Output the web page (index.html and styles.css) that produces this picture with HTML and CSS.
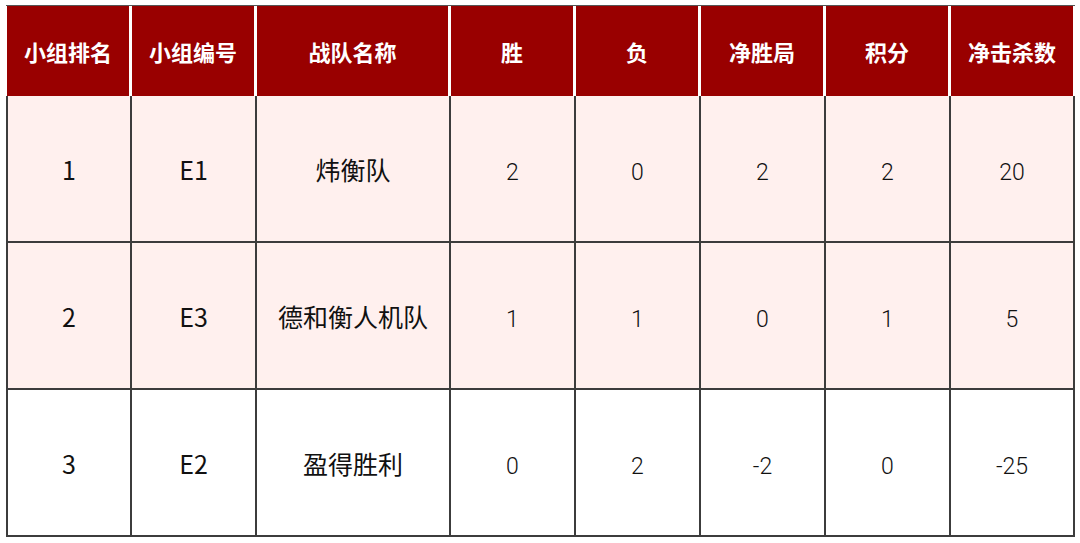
FILE: index.html
```html
<!DOCTYPE html>
<html lang="zh">
<head>
<meta charset="utf-8">
<link rel="stylesheet" href="styles.css">
</head>
<body>
<div class="board">
  <div class="head">
    <div class="hc">小组排名</div>
    <div class="hc">小组编号</div>
    <div class="hc">战队名称</div>
    <div class="hc">胜</div>
    <div class="hc">负</div>
    <div class="hc">净胜局</div>
    <div class="hc">积分</div>
    <div class="hc">净击杀数</div>
  </div>
  <div class="body">
    <div class="c big pink">1</div><div class="c big pink">E1</div><div class="c big pink">炜衡队</div>
    <div class="c num pink">2</div><div class="c num pink">0</div><div class="c num pink">2</div><div class="c num pink">2</div><div class="c num pink">20</div>

    <div class="c big pink">2</div><div class="c big pink">E3</div><div class="c big pink">德和衡人机队</div>
    <div class="c num pink">1</div><div class="c num pink">1</div><div class="c num pink">0</div><div class="c num pink">1</div><div class="c num pink">5</div>

    <div class="c big">3</div><div class="c big">E2</div><div class="c big">盈得胜利</div>
    <div class="c num">0</div><div class="c num">2</div><div class="c num">-2</div><div class="c num">0</div><div class="c num">-25</div>
  </div>
</div>
</body>
</html>
```

FILE: styles.css
```css
html, body {
  margin: 0;
  padding: 0;
  background: #ffffff;
}
.board {
  margin: 5px 0 0 6px;
  width: 1069px;
}
.head {
  display: grid;
  grid-template-columns: 122px 122px 191px 122px 122px 122px 122px 122px;
  column-gap: 3px;
  border-top: 1px solid #555;
  height: 90px;
  padding-left: 1px;
}
.hc {
  background: #990000;
  color: #ffffff;
  font-family: "Noto Sans CJK SC", "Noto Sans", sans-serif;
  font-weight: 700;
  font-size: 22px;
  display: flex;
  align-items: center;
  justify-content: center;
}
.body {
  display: grid;
  grid-template-columns: 124px 125px 194px 125px 125px 125px 125px 124px;
  grid-auto-rows: 147px;
  border-left: 2px solid #3c3c3c;
  width: 1067px;
}
.c {
  border-right: 2px solid #3c3c3c;
  border-bottom: 2px solid #3c3c3c;
  display: flex;
  align-items: center;
  justify-content: center;
  color: #111;
}
.pink {
  background: #fff0ee;
}
.big {
  font-family: "Noto Sans CJK SC", "Noto Sans", sans-serif;
  font-size: 25px;
  font-weight: 400;
}
.num {
  font-family: Roboto, "Noto Sans", sans-serif;
  font-size: 23px;
  font-weight: 300;
  padding-top: 8px;
}
```
